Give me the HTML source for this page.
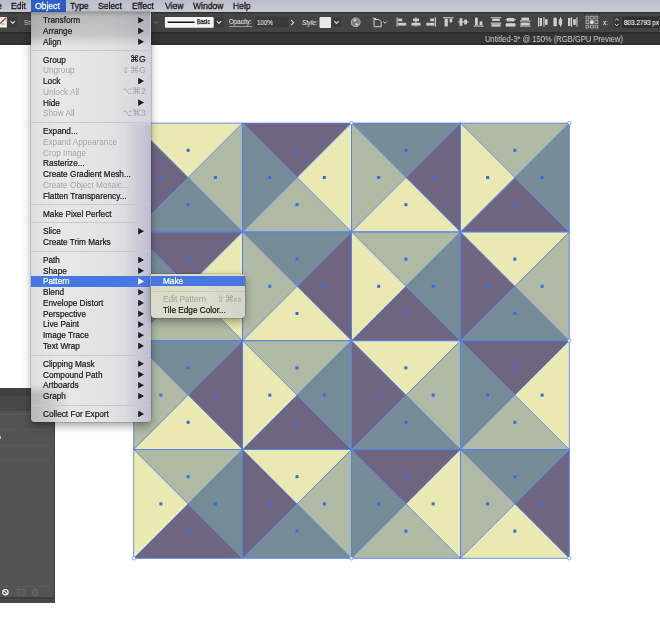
<!DOCTYPE html><html><head><meta charset="utf-8"><style>
html,body{margin:0;padding:0}
body{width:660px;height:617px;overflow:hidden;background:#fff;position:relative;font-family:"Liberation Sans",sans-serif}
#art{position:absolute;left:0;top:0}
.abs{position:absolute}
.sx{display:inline-block;transform:scaleX(.92);transform-origin:0 50%;white-space:nowrap}
#mbar{left:0;top:0;width:660px;height:12px;background:linear-gradient(180deg,#babecb 0,#c7cad5 100%);font-size:9.4px;color:#141414;line-height:12px;-webkit-text-stroke:.3px}
#mbar span{position:absolute;top:0px;will-change:transform;white-space:nowrap;transform:scaleX(.915);transform-origin:0 50%}
#mbar .selbg{left:31px;top:0;width:35px;height:12px;background:#2c5fc9}
#cbar{left:0;top:12px;width:660px;height:20px;background:#444;box-shadow:inset 0 1.3px 0 #2e2e2e}
#cline{left:0;top:32px;width:660px;height:2px;background:#2d2d2d}
#tbar{left:0;top:34px;width:660px;height:10.5px;background:#343434;box-shadow:inset 0 -1.4px 0 #2b2b2b;color:#d2d2d2;font-size:8.4px;line-height:10.6px}
.ct{position:absolute;will-change:transform;color:#dedede;-webkit-text-stroke:.15px;font-size:6.7px;line-height:10px;white-space:nowrap;transform:scaleX(.92);transform-origin:0 50%}
#menu{left:31px;top:12px;width:119.5px;height:409.5px;background:linear-gradient(90deg,#dfe0e3 0%,#e8e8ea 25%,#e2e2e5 65%,#d3d3da 100%);border-radius:0 0 4px 4px;box-shadow:0 4px 9px rgba(0,0,0,.35),0 0 0 .5px rgba(0,0,0,.28),inset 0 4px 4px -3px rgba(0,0,0,.28);font-size:9.3px;color:#151515;-webkit-text-stroke:.22px}
.mi{position:absolute;left:0;width:119px;height:11px;line-height:11px;white-space:nowrap}
.mi span{position:absolute;left:11.8px;top:.6px;transform:scaleX(.885);transform-origin:0 50%}
.mi.dis{color:#a3a3a9;-webkit-text-stroke:0}
.mi.hl{background:#4677e2;color:#fff}
.mi .ar{position:absolute;display:block;left:107.2px;top:2.2px;width:5.8px;height:6.6px;background:#1e1e1e;clip-path:polygon(0 0,100% 50%,0 100%)}
.mi.hl .ar{background:#fff}
.mi .sc{position:absolute;right:4px;font-weight:normal;font-size:8.6px;letter-spacing:.2px}
.sep{position:absolute;left:0;width:119px;height:1px;background:#c8c8cd}
#sub{left:150.5px;top:274px;width:94px;height:44.2px;background:linear-gradient(90deg,#d9dac8 0%,#dcddca 55%,#d2d5c8 100%);border-radius:0 4px 4px 4px;box-shadow:0 4px 9px rgba(0,0,0,.35),0 0 0 .5px rgba(0,0,0,.28);font-size:9.3px;color:#151515;-webkit-text-stroke:.22px}
#sub .mi{width:94px}#sub .mi span{left:12px;top:0}#sub .mi.dis{color:#a0a297}#sub .mi.hl{height:10.2px;line-height:10.6px}
#sub .sep{width:94px;background:#c6c8ba}
#panel{left:0;top:388px;width:54.6px;height:215px;background:#535353;box-shadow:inset -1px 0 0 #3e3e3e}
#panel div{position:absolute;left:0;width:54.5px}
</style></head><body>
<svg id="art" width="660" height="617" viewBox="0 0 660 617"><polygon points="133.7,123.1 242.6,123.1 188.1,177.5" fill="#e9e9b1"/><polygon points="242.6,123.1 242.6,231.9 188.1,177.5" fill="#afb9a3"/><polygon points="242.6,231.9 133.7,231.9 188.1,177.5" fill="#758c96"/><polygon points="133.7,231.9 133.7,123.1 188.1,177.5" fill="#6f6581"/><polygon points="242.6,123.1 351.5,123.1 297.0,177.5" fill="#6f6581"/><polygon points="351.5,123.1 351.5,231.9 297.0,177.5" fill="#e9e9b1"/><polygon points="351.5,231.9 242.6,231.9 297.0,177.5" fill="#afb9a3"/><polygon points="242.6,231.9 242.6,123.1 297.0,177.5" fill="#758c96"/><polygon points="351.5,123.1 460.4,123.1 405.9,177.5" fill="#758c96"/><polygon points="460.4,123.1 460.4,231.9 405.9,177.5" fill="#6f6581"/><polygon points="460.4,231.9 351.5,231.9 405.9,177.5" fill="#e9e9b1"/><polygon points="351.5,231.9 351.5,123.1 405.9,177.5" fill="#afb9a3"/><polygon points="460.4,123.1 569.3,123.1 514.9,177.5" fill="#afb9a3"/><polygon points="569.3,123.1 569.3,231.9 514.9,177.5" fill="#758c96"/><polygon points="569.3,231.9 460.4,231.9 514.9,177.5" fill="#6f6581"/><polygon points="460.4,231.9 460.4,123.1 514.9,177.5" fill="#e9e9b1"/><polygon points="133.7,231.9 242.6,231.9 188.1,286.3" fill="#6f6581"/><polygon points="242.6,231.9 242.6,340.7 188.1,286.3" fill="#e9e9b1"/><polygon points="242.6,340.7 133.7,340.7 188.1,286.3" fill="#afb9a3"/><polygon points="133.7,340.7 133.7,231.9 188.1,286.3" fill="#758c96"/><polygon points="242.6,231.9 351.5,231.9 297.0,286.3" fill="#758c96"/><polygon points="351.5,231.9 351.5,340.7 297.0,286.3" fill="#6f6581"/><polygon points="351.5,340.7 242.6,340.7 297.0,286.3" fill="#e9e9b1"/><polygon points="242.6,340.7 242.6,231.9 297.0,286.3" fill="#afb9a3"/><polygon points="351.5,231.9 460.4,231.9 405.9,286.3" fill="#afb9a3"/><polygon points="460.4,231.9 460.4,340.7 405.9,286.3" fill="#758c96"/><polygon points="460.4,340.7 351.5,340.7 405.9,286.3" fill="#6f6581"/><polygon points="351.5,340.7 351.5,231.9 405.9,286.3" fill="#e9e9b1"/><polygon points="460.4,231.9 569.3,231.9 514.9,286.3" fill="#e9e9b1"/><polygon points="569.3,231.9 569.3,340.7 514.9,286.3" fill="#afb9a3"/><polygon points="569.3,340.7 460.4,340.7 514.9,286.3" fill="#758c96"/><polygon points="460.4,340.7 460.4,231.9 514.9,286.3" fill="#6f6581"/><polygon points="133.7,340.7 242.6,340.7 188.1,395.1" fill="#758c96"/><polygon points="242.6,340.7 242.6,449.5 188.1,395.1" fill="#6f6581"/><polygon points="242.6,449.5 133.7,449.5 188.1,395.1" fill="#e9e9b1"/><polygon points="133.7,449.5 133.7,340.7 188.1,395.1" fill="#afb9a3"/><polygon points="242.6,340.7 351.5,340.7 297.0,395.1" fill="#afb9a3"/><polygon points="351.5,340.7 351.5,449.5 297.0,395.1" fill="#758c96"/><polygon points="351.5,449.5 242.6,449.5 297.0,395.1" fill="#6f6581"/><polygon points="242.6,449.5 242.6,340.7 297.0,395.1" fill="#e9e9b1"/><polygon points="351.5,340.7 460.4,340.7 405.9,395.1" fill="#e9e9b1"/><polygon points="460.4,340.7 460.4,449.5 405.9,395.1" fill="#afb9a3"/><polygon points="460.4,449.5 351.5,449.5 405.9,395.1" fill="#758c96"/><polygon points="351.5,449.5 351.5,340.7 405.9,395.1" fill="#6f6581"/><polygon points="460.4,340.7 569.3,340.7 514.9,395.1" fill="#6f6581"/><polygon points="569.3,340.7 569.3,449.5 514.9,395.1" fill="#e9e9b1"/><polygon points="569.3,449.5 460.4,449.5 514.9,395.1" fill="#afb9a3"/><polygon points="460.4,449.5 460.4,340.7 514.9,395.1" fill="#758c96"/><polygon points="133.7,449.5 242.6,449.5 188.1,503.9" fill="#afb9a3"/><polygon points="242.6,449.5 242.6,558.3 188.1,503.9" fill="#758c96"/><polygon points="242.6,558.3 133.7,558.3 188.1,503.9" fill="#6f6581"/><polygon points="133.7,558.3 133.7,449.5 188.1,503.9" fill="#e9e9b1"/><polygon points="242.6,449.5 351.5,449.5 297.0,503.9" fill="#e9e9b1"/><polygon points="351.5,449.5 351.5,558.3 297.0,503.9" fill="#afb9a3"/><polygon points="351.5,558.3 242.6,558.3 297.0,503.9" fill="#758c96"/><polygon points="242.6,558.3 242.6,449.5 297.0,503.9" fill="#6f6581"/><polygon points="351.5,449.5 460.4,449.5 405.9,503.9" fill="#6f6581"/><polygon points="460.4,449.5 460.4,558.3 405.9,503.9" fill="#e9e9b1"/><polygon points="460.4,558.3 351.5,558.3 405.9,503.9" fill="#afb9a3"/><polygon points="351.5,558.3 351.5,449.5 405.9,503.9" fill="#758c96"/><polygon points="460.4,449.5 569.3,449.5 514.9,503.9" fill="#758c96"/><polygon points="569.3,449.5 569.3,558.3 514.9,503.9" fill="#6f6581"/><polygon points="569.3,558.3 460.4,558.3 514.9,503.9" fill="#e9e9b1"/><polygon points="460.4,558.3 460.4,449.5 514.9,503.9" fill="#afb9a3"/><g fill="none" stroke="#4f82f4" stroke-width="0.85"><path d="M133.7 123.1L242.6 231.9M242.6 123.1L133.7 231.9"/><rect x="133.7" y="123.1" width="108.9" height="108.8"/><path d="M242.6 123.1L351.5 231.9M351.5 123.1L242.6 231.9"/><rect x="242.6" y="123.1" width="108.9" height="108.8"/><path d="M351.5 123.1L460.4 231.9M460.4 123.1L351.5 231.9"/><rect x="351.5" y="123.1" width="108.9" height="108.8"/><path d="M460.4 123.1L569.3 231.9M569.3 123.1L460.4 231.9"/><rect x="460.4" y="123.1" width="108.9" height="108.8"/><path d="M133.7 231.9L242.6 340.7M242.6 231.9L133.7 340.7"/><rect x="133.7" y="231.9" width="108.9" height="108.8"/><path d="M242.6 231.9L351.5 340.7M351.5 231.9L242.6 340.7"/><rect x="242.6" y="231.9" width="108.9" height="108.8"/><path d="M351.5 231.9L460.4 340.7M460.4 231.9L351.5 340.7"/><rect x="351.5" y="231.9" width="108.9" height="108.8"/><path d="M460.4 231.9L569.3 340.7M569.3 231.9L460.4 340.7"/><rect x="460.4" y="231.9" width="108.9" height="108.8"/><path d="M133.7 340.7L242.6 449.5M242.6 340.7L133.7 449.5"/><rect x="133.7" y="340.7" width="108.9" height="108.8"/><path d="M242.6 340.7L351.5 449.5M351.5 340.7L242.6 449.5"/><rect x="242.6" y="340.7" width="108.9" height="108.8"/><path d="M351.5 340.7L460.4 449.5M460.4 340.7L351.5 449.5"/><rect x="351.5" y="340.7" width="108.9" height="108.8"/><path d="M460.4 340.7L569.3 449.5M569.3 340.7L460.4 449.5"/><rect x="460.4" y="340.7" width="108.9" height="108.8"/><path d="M133.7 449.5L242.6 558.3M242.6 449.5L133.7 558.3"/><rect x="133.7" y="449.5" width="108.9" height="108.8"/><path d="M242.6 449.5L351.5 558.3M351.5 449.5L242.6 558.3"/><rect x="242.6" y="449.5" width="108.9" height="108.8"/><path d="M351.5 449.5L460.4 558.3M460.4 449.5L351.5 558.3"/><rect x="351.5" y="449.5" width="108.9" height="108.8"/><path d="M460.4 449.5L569.3 558.3M569.3 449.5L460.4 558.3"/><rect x="460.4" y="449.5" width="108.9" height="108.8"/></g><g fill="#2f6df0"><rect x="186.6" y="148.8" width="3" height="3"/><rect x="213.9" y="176.0" width="3" height="3"/><rect x="186.6" y="203.2" width="3" height="3"/><rect x="159.4" y="176.0" width="3" height="3"/><rect x="295.5" y="148.8" width="3" height="3"/><rect x="322.8" y="176.0" width="3" height="3"/><rect x="295.5" y="203.2" width="3" height="3"/><rect x="268.3" y="176.0" width="3" height="3"/><rect x="404.4" y="148.8" width="3" height="3"/><rect x="431.7" y="176.0" width="3" height="3"/><rect x="404.4" y="203.2" width="3" height="3"/><rect x="377.2" y="176.0" width="3" height="3"/><rect x="513.3" y="148.8" width="3" height="3"/><rect x="540.6" y="176.0" width="3" height="3"/><rect x="513.3" y="203.2" width="3" height="3"/><rect x="486.1" y="176.0" width="3" height="3"/><rect x="186.6" y="257.6" width="3" height="3"/><rect x="213.9" y="284.8" width="3" height="3"/><rect x="186.6" y="312.0" width="3" height="3"/><rect x="159.4" y="284.8" width="3" height="3"/><rect x="295.5" y="257.6" width="3" height="3"/><rect x="322.8" y="284.8" width="3" height="3"/><rect x="295.5" y="312.0" width="3" height="3"/><rect x="268.3" y="284.8" width="3" height="3"/><rect x="404.4" y="257.6" width="3" height="3"/><rect x="431.7" y="284.8" width="3" height="3"/><rect x="404.4" y="312.0" width="3" height="3"/><rect x="377.2" y="284.8" width="3" height="3"/><rect x="513.3" y="257.6" width="3" height="3"/><rect x="540.6" y="284.8" width="3" height="3"/><rect x="513.3" y="312.0" width="3" height="3"/><rect x="486.1" y="284.8" width="3" height="3"/><rect x="186.6" y="366.4" width="3" height="3"/><rect x="213.9" y="393.6" width="3" height="3"/><rect x="186.6" y="420.8" width="3" height="3"/><rect x="159.4" y="393.6" width="3" height="3"/><rect x="295.5" y="366.4" width="3" height="3"/><rect x="322.8" y="393.6" width="3" height="3"/><rect x="295.5" y="420.8" width="3" height="3"/><rect x="268.3" y="393.6" width="3" height="3"/><rect x="404.4" y="366.4" width="3" height="3"/><rect x="431.7" y="393.6" width="3" height="3"/><rect x="404.4" y="420.8" width="3" height="3"/><rect x="377.2" y="393.6" width="3" height="3"/><rect x="513.3" y="366.4" width="3" height="3"/><rect x="540.6" y="393.6" width="3" height="3"/><rect x="513.3" y="420.8" width="3" height="3"/><rect x="486.1" y="393.6" width="3" height="3"/><rect x="186.6" y="475.2" width="3" height="3"/><rect x="213.9" y="502.4" width="3" height="3"/><rect x="186.6" y="529.6" width="3" height="3"/><rect x="159.4" y="502.4" width="3" height="3"/><rect x="295.5" y="475.2" width="3" height="3"/><rect x="322.8" y="502.4" width="3" height="3"/><rect x="295.5" y="529.6" width="3" height="3"/><rect x="268.3" y="502.4" width="3" height="3"/><rect x="404.4" y="475.2" width="3" height="3"/><rect x="431.7" y="502.4" width="3" height="3"/><rect x="404.4" y="529.6" width="3" height="3"/><rect x="377.2" y="502.4" width="3" height="3"/><rect x="513.3" y="475.2" width="3" height="3"/><rect x="540.6" y="502.4" width="3" height="3"/><rect x="513.3" y="529.6" width="3" height="3"/><rect x="486.1" y="502.4" width="3" height="3"/></g><circle cx="133.7" cy="123.1" r="1.7" fill="#fff" stroke="#4f82f4" stroke-width="0.7"/><circle cx="569.3" cy="123.1" r="1.7" fill="#fff" stroke="#4f82f4" stroke-width="0.7"/><circle cx="133.7" cy="558.3" r="1.7" fill="#fff" stroke="#4f82f4" stroke-width="0.7"/><circle cx="569.3" cy="558.3" r="1.7" fill="#fff" stroke="#4f82f4" stroke-width="0.7"/><circle cx="351.5" cy="558.3" r="1.7" fill="#fff" stroke="#4f82f4" stroke-width="0.7"/><circle cx="351.5" cy="123.1" r="1.7" fill="#fff" stroke="#4f82f4" stroke-width="0.7"/><circle cx="569.3" cy="340.7" r="1.7" fill="#fff" stroke="#4f82f4" stroke-width="0.7"/><circle cx="133.7" cy="340.7" r="1.7" fill="#fff" stroke="#4f82f4" stroke-width="0.7"/></svg>
<div id="panel" class="abs">
<div style="top:0;height:7.5px;background:#414141"></div><div style="top:7.5px;height:15.5px;background:#474747"></div>
<div style="top:47.5px;height:3px;background:#b8b8b8;width:1.4px"></div><div style="top:26px;height:1px;background:#595959;width:50px"></div><div style="top:41px;height:1px;background:#595959;width:50px"></div><div style="top:56.5px;height:1px;background:#595959;width:50px"></div><div style="top:71px;height:1px;background:#595959;width:50px"></div>
<div style="top:198px;height:1px;background:#5b5b5b;width:50px"></div>
<div style="top:209.3px;height:1.5px;background:#3d3d3d"></div><div style="top:210.8px;height:4.2px;background:#494949"></div>
<svg class="abs" style="left:0;top:196px" width="55" height="16" viewBox="0 0 55 16"><circle cx="5.4" cy="8.2" r="2.7" fill="none" stroke="#f0f0f0" stroke-width="1.2"/><path d="M3.5 6.3l3.8 3.8" stroke="#f0f0f0" stroke-width="1.2"/><rect x="17.8" y="5.2" width="6.2" height="6" fill="none" stroke="#6b6b6b" stroke-width="0.9"/><rect x="20" y="7.3" width="1.5" height="1.5" fill="#6b6b6b"/><path d="M32.4 6h5.4M33 6.4v5h4.2v-5M34 5.2h2.2" fill="none" stroke="#6b6b6b" stroke-width="0.9"/></svg>
</div>
<div id="cbar" class="abs"></div><div id="cline" class="abs"></div>
<div id="tbar" class="abs"><span class="abs" style="left:485px;top:0;white-space:nowrap;will-change:transform;transform:scaleX(.905);transform-origin:0 50%">Untitled-3* @ 150% (RGB/GPU Preview)</span></div>
<svg class="abs" style="left:0;top:0" width="660" height="46" viewBox="0 0 660 46"><rect x="0.0" y="17.0" width="6.8" height="10.5" fill="#f6f6f6" /><path d="M0.8 24h4.6" stroke="#7a9aa0" stroke-width=".9"/><path d="M0 23.6L6.2 17.8" stroke="#e02020" stroke-width="1.3"/><rect x="8.6" y="17.5" width="8.4" height="9.4" fill="#3a3a3a" rx="1"/><path d="M10.6 21.2l2.2 2.2l2.2 -2.2" fill="none" stroke="#e0e0e0" stroke-width="1.1"/><path d="M153.8 21.4l2.2 2.2l2.2 -2.2" fill="none" stroke="#646464" stroke-width="1.1"/><rect x="164.9" y="16.9" width="48.8" height="10.8" fill="#f4f4f4" rx="1"/><rect x="167.6" y="21.5" width="27.0" height="1.5" fill="#111" /><rect x="214.8" y="17.5" width="8.4" height="9.4" fill="#3a3a3a" rx="1"/><path d="M216.8 21.2l2.2 2.2l2.2 -2.2" fill="none" stroke="#e0e0e0" stroke-width="1.1"/><rect x="254.8" y="16.6" width="33.0" height="10.6" fill="#3a3a3a" rx="1"/><path d="M291.2 20.2l2.4 2.4l-2.4 2.4" fill="none" stroke="#d8d8d8" stroke-width="1.1"/><rect x="319.5" y="17.0" width="11.5" height="11.0" fill="#e9e9e9" rx="1"/><rect x="332.3" y="17.5" width="8.4" height="9.4" fill="#3a3a3a" rx="1"/><path d="M334.3 21.2l2.2 2.2l2.2 -2.2" fill="none" stroke="#e0e0e0" stroke-width="1.1"/><circle cx="355.7" cy="22.3" r="4.4" fill="#7d7d7d" stroke="#bdbdbd" stroke-width="0.9"/><path d="M353.2 20.2q1.6 -1.6 3.4 -.8q-.4 1.8 -2.2 2.2zM355.4 23.4q2 -.6 3 .8q-1 1.8 -2.6 1.6z" fill="#d8d8d8"/><path d="M374 19.5h5l2.2 2.2v5h-7.2z" fill="none" stroke="#cfcfcf" stroke-width="1"/><path d="M372.8 18.3h3.5" stroke="#cfcfcf" stroke-width="1"/><path d="M383.2 21.5l1.8 1.8l1.8 -1.8" fill="none" stroke="#d0d0d0" stroke-width="1"/><rect x="396.6" y="17.2" width="1.1" height="9.4" fill="#cfcfcf" /><rect x="398.2" y="18.6" width="4.0" height="2.6" fill="#cfcfcf" /><rect x="398.2" y="22.8" width="8.0" height="2.8" fill="#cfcfcf" /><rect x="415.4" y="17.2" width="1.1" height="9.4" fill="#cfcfcf" /><rect x="413.0" y="18.6" width="6.0" height="2.6" fill="#cfcfcf" /><rect x="411.4" y="22.8" width="9.2" height="2.8" fill="#cfcfcf" /><rect x="434.8" y="17.2" width="1.1" height="9.4" fill="#cfcfcf" /><rect x="430.2" y="18.6" width="4.0" height="2.6" fill="#cfcfcf" /><rect x="426.4" y="22.8" width="8.0" height="2.8" fill="#cfcfcf" /><rect x="443.0" y="17.2" width="10.6" height="1.1" fill="#cfcfcf" /><rect x="444.6" y="18.8" width="3.2" height="7.6" fill="#cfcfcf" /><rect x="449.6" y="18.8" width="2.6" height="3.6" fill="#cfcfcf" /><rect x="458.2" y="21.4" width="10.2" height="1.1" fill="#cfcfcf" /><rect x="459.6" y="18.2" width="2.8" height="7.6" fill="#cfcfcf" /><rect x="464.2" y="19.6" width="2.8" height="4.8" fill="#cfcfcf" /><rect x="473.6" y="25.5" width="10.0" height="1.1" fill="#cfcfcf" /><rect x="475.0" y="17.6" width="2.8" height="7.4" fill="#cfcfcf" /><rect x="479.6" y="21.4" width="2.8" height="3.6" fill="#cfcfcf" /><rect x="490.8" y="17.2" width="10.4" height="1.1" fill="#cfcfcf" /><rect x="492.2" y="18.8" width="7.6" height="2.2" fill="#cfcfcf" /><rect x="490.8" y="22.6" width="10.4" height="1.1" fill="#cfcfcf" /><rect x="491.4" y="24.2" width="9.2" height="2.4" fill="#cfcfcf" /><rect x="505.4" y="19.2" width="10.4" height="1.1" fill="#cfcfcf" /><rect x="507.0" y="18.0" width="7.2" height="3.4" fill="#cfcfcf" /><rect x="505.4" y="24.4" width="10.4" height="1.1" fill="#cfcfcf" /><rect x="506.0" y="23.2" width="9.2" height="3.4" fill="#cfcfcf" /><rect x="521.4" y="17.6" width="7.6" height="2.4" fill="#cfcfcf" /><rect x="520.0" y="20.4" width="10.4" height="1.1" fill="#cfcfcf" /><rect x="520.6" y="22.6" width="9.2" height="2.6" fill="#cfcfcf" /><rect x="520.0" y="25.5" width="10.4" height="1.1" fill="#cfcfcf" /><rect x="538.0" y="17.2" width="1.1" height="9.4" fill="#cfcfcf" /><rect x="539.6" y="18.0" width="2.4" height="8.0" fill="#cfcfcf" /><rect x="543.4" y="17.2" width="1.1" height="9.4" fill="#cfcfcf" /><rect x="545.0" y="19.2" width="2.6" height="5.6" fill="#cfcfcf" /><rect x="554.6" y="17.2" width="1.1" height="9.4" fill="#cfcfcf" /><rect x="553.4" y="18.0" width="3.4" height="8.0" fill="#cfcfcf" /><rect x="560.0" y="17.2" width="1.1" height="9.4" fill="#cfcfcf" /><rect x="558.8" y="19.2" width="3.4" height="5.6" fill="#cfcfcf" /><rect x="568.0" y="18.0" width="2.4" height="8.0" fill="#cfcfcf" /><rect x="571.0" y="17.2" width="1.1" height="9.4" fill="#cfcfcf" /><rect x="573.2" y="19.2" width="2.6" height="5.6" fill="#cfcfcf" /><rect x="576.4" y="17.2" width="1.1" height="9.4" fill="#cfcfcf" /><rect x="586.0" y="16.2" width="2.8" height="2.8" fill="none" stroke="#bdbdbd" stroke-width="0.8"/><rect x="586.0" y="20.7" width="2.8" height="2.8" fill="none" stroke="#bdbdbd" stroke-width="0.8"/><rect x="586.0" y="25.2" width="2.8" height="2.8" fill="none" stroke="#bdbdbd" stroke-width="0.8"/><rect x="590.5" y="16.2" width="2.8" height="2.8" fill="none" stroke="#bdbdbd" stroke-width="0.8"/><rect x="590.2" y="20.4" width="3.4" height="3.4" fill="#f2f2f2" /><rect x="590.5" y="25.2" width="2.8" height="2.8" fill="none" stroke="#bdbdbd" stroke-width="0.8"/><rect x="595.0" y="16.2" width="2.8" height="2.8" fill="none" stroke="#bdbdbd" stroke-width="0.8"/><rect x="595.0" y="20.7" width="2.8" height="2.8" fill="none" stroke="#bdbdbd" stroke-width="0.8"/><rect x="595.0" y="25.2" width="2.8" height="2.8" fill="none" stroke="#bdbdbd" stroke-width="0.8"/><rect x="613.6" y="16.5" width="6.4" height="11.5" fill="#343434" rx="1"/><path d="M614.8 20.6l2 -2l2 2M614.8 23.8l2 2l2 -2" fill="none" stroke="#d8d8d8" stroke-width="1"/><rect x="621.8" y="16.5" width="40.0" height="11.5" fill="#303030" rx="1"/></svg>
<span class="ct" style="left:24px;top:18px;color:#b4b4b4">Stroke:</span>
<span class="ct" style="left:197.3px;top:17.3px;color:#111;font-size:6.4px;transform:scaleX(.83);-webkit-text-stroke:.25px #111">Basic</span>
<span class="ct" style="left:229px;top:17.5px;border-bottom:.8px solid #9a9a9a;line-height:7.6px;top:18.2px">Opacity:</span>
<span class="ct" style="left:257px;top:17.5px">100%</span>
<span class="ct" style="left:301.5px;top:17.5px;font-style:italic">Style:</span>
<span class="ct" style="left:603px;top:17.5px">x:</span>
<span class="ct" style="left:624.2px;top:17.6px;color:#eee;font-size:6.95px">803.2793 px</span>
<div id="mbar" class="abs"><div class="abs selbg"></div><span style="left:-3.2px">e</span><span style="left:10.8px">Edit</span><span style="left:35px;color:#fff">Object</span><span style="left:69.6px">Type</span><span style="left:98.2px">Select</span><span style="left:131.6px">Effect</span><span style="left:164.6px">View</span><span style="left:192.6px">Window</span><span style="left:232.8px">Help</span></div>
<div id="menu" class="abs"><div class="abs" style="left:0;top:0;width:119px;height:36px;background:linear-gradient(90deg,rgba(20,20,30,.09) 0,rgba(20,20,30,0) 60px),linear-gradient(180deg,rgba(20,20,30,.2) 0,rgba(20,20,30,.15) 20px,rgba(20,20,30,.09) 31px,rgba(0,0,0,0) 37px);-webkit-mask-image:linear-gradient(180deg,#000 0,#000 24px,transparent 36px)"></div><div class="abs" style="left:0;top:372px;width:40px;height:37.5px;border-radius:0 0 0 4px;background:linear-gradient(90deg,rgba(20,20,30,.2) 0,rgba(20,20,30,.12) 20px,rgba(0,0,0,0) 40px);-webkit-mask-image:linear-gradient(180deg,transparent 0,#000 10px)"></div><div class="abs" style="left:93px;top:109px;width:26.5px;height:300.5px;border-radius:0 0 4px 0;background:linear-gradient(90deg,rgba(110,105,170,0) 0,rgba(110,105,170,.1) 45%,rgba(110,105,170,.2) 100%);-webkit-mask-image:linear-gradient(180deg,transparent 0,#000 6px)"></div><div class="mi" style="top:2.7px"><span>Transform</span><i class="ar"></i></div><div class="mi" style="top:13.4px"><span>Arrange</span><i class="ar"></i></div><div class="mi" style="top:24.2px"><span>Align</span><i class="ar"></i></div><div class="mi" style="top:42.1px"><span>Group</span><b class="sc">⌘G</b></div><div class="mi dis" style="top:52.8px"><span>Ungroup</span><b class="sc">⇧⌘G</b></div><div class="mi" style="top:63.6px"><span>Lock</span><i class="ar"></i></div><div class="mi dis" style="top:74.3px"><span>Unlock All</span><b class="sc">⌥⌘2</b></div><div class="mi" style="top:85.1px"><span>Hide</span><i class="ar"></i></div><div class="mi dis" style="top:95.8px"><span>Show All</span><b class="sc">⌥⌘3</b></div><div class="mi" style="top:113.7px"><span>Expand...</span></div><div class="mi dis" style="top:124.4px"><span>Expand Appearance</span></div><div class="mi dis" style="top:135.2px"><span>Crop Image</span></div><div class="mi" style="top:145.9px"><span>Rasterize...</span></div><div class="mi" style="top:156.7px"><span>Create Gradient Mesh...</span></div><div class="mi dis" style="top:167.4px"><span>Create Object Mosaic...</span></div><div class="mi" style="top:178.2px"><span>Flatten Transparency...</span></div><div class="mi" style="top:196.0px"><span>Make Pixel Perfect</span></div><div class="mi" style="top:213.8px"><span>Slice</span><i class="ar"></i></div><div class="mi" style="top:224.6px"><span>Create Trim Marks</span></div><div class="mi" style="top:242.4px"><span>Path</span><i class="ar"></i></div><div class="mi" style="top:253.2px"><span>Shape</span><i class="ar"></i></div><div class="mi hl" style="top:263.9px"><span>Pattern</span><i class="ar"></i></div><div class="mi" style="top:274.7px"><span>Blend</span><i class="ar"></i></div><div class="mi" style="top:285.4px"><span>Envelope Distort</span><i class="ar"></i></div><div class="mi" style="top:296.2px"><span>Perspective</span><i class="ar"></i></div><div class="mi" style="top:306.9px"><span>Live Paint</span><i class="ar"></i></div><div class="mi" style="top:317.7px"><span>Image Trace</span><i class="ar"></i></div><div class="mi" style="top:328.4px"><span>Text Wrap</span><i class="ar"></i></div><div class="mi" style="top:346.3px"><span>Clipping Mask</span><i class="ar"></i></div><div class="mi" style="top:357.1px"><span>Compound Path</span><i class="ar"></i></div><div class="mi" style="top:367.8px"><span>Artboards</span><i class="ar"></i></div><div class="mi" style="top:378.6px"><span>Graph</span><i class="ar"></i></div><div class="mi" style="top:396.4px"><span>Collect For Export</span><i class="ar"></i></div><div class="sep" style="top:38.2px"></div><div class="sep" style="top:109.8px"></div><div class="sep" style="top:192.2px"></div><div class="sep" style="top:210.0px"></div><div class="sep" style="top:238.6px"></div><div class="sep" style="top:342.5px"></div><div class="sep" style="top:392.6px"></div></div>
<div id="sub" class="abs"><div class="mi hl" style="top:2px"><span>Make</span></div><div class="sep" style="top:17px"></div><div class="mi dis" style="top:20.1px"><span>Edit Pattern</span><b class="sc" style="right:3px">⇧⌘<small style="font-size:6px">F8</small></b></div><div class="mi" style="top:31.1px"><span>Tile Edge Color...</span></div></div>
</body></html>
